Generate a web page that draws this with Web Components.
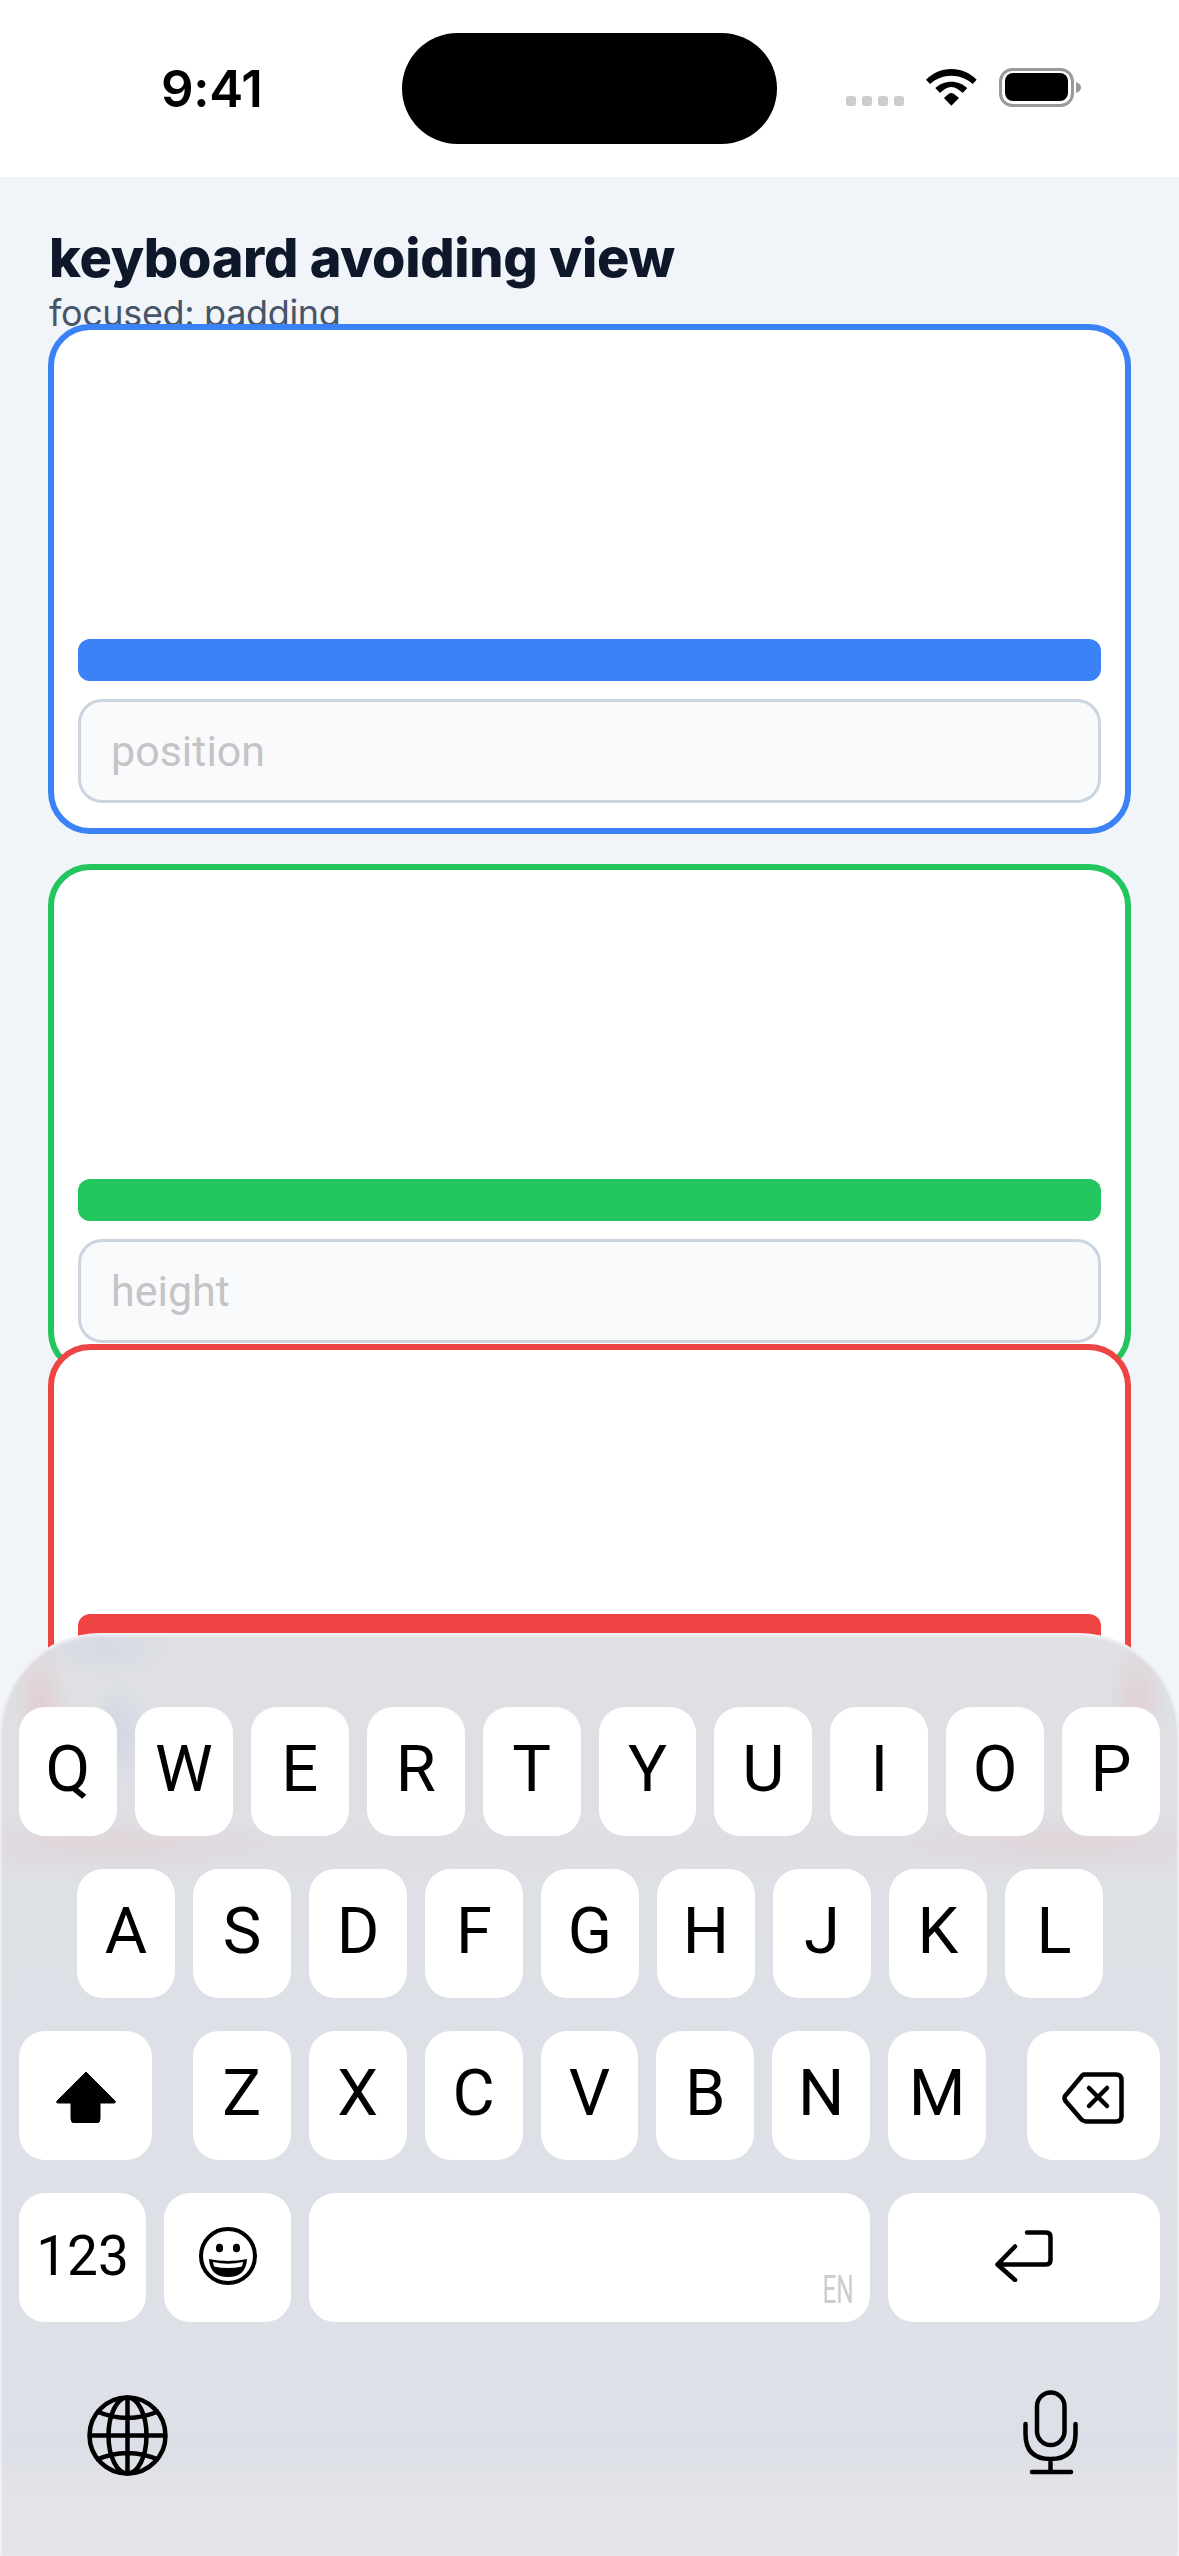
<!DOCTYPE html>
<html>
<head>
<meta charset="utf-8">
<style>
html,body{margin:0;padding:0;background:#f1f5f9;}
body{width:1179px;height:2556px;overflow:hidden;position:relative;font-family:Inter,"Liberation Sans",sans-serif;}
</style>
</head>
<body>
<status-bar></status-bar>
<kav-screen title="keyboard avoiding view" focused="focused: padding">
  <kav-card color="#3b82f6" placeholder="position"></kav-card>
  <kav-card color="#22c55e" placeholder="height"></kav-card>
  <kav-card color="#ef4444" class="last"></kav-card>
</kav-screen>
<ios-keyboard></ios-keyboard>

<script>
class StatusBar extends HTMLElement {
  constructor() {
    super();
    this.attachShadow({ mode: 'open' }).innerHTML = `
    <style>
    :host{display:flex;height:177px;background:#fff;align-items:flex-start;box-sizing:border-box;padding-top:33px;}
    .time{width:402px;box-sizing:border-box;padding-left:161px;padding-top:26px;font:600 51px/60px Inter,sans-serif;color:#000;letter-spacing:-.3px;}
    .island{width:375px;height:111px;border-radius:56px;background:#000;}
    .right{display:flex;align-items:flex-start;padding-top:36px;}
    .signal{display:flex;gap:6px;margin:27px 0 0 69px;}
    .signal i{width:10px;height:10px;border-radius:3px;background:#ccc;}
    svg{display:block;}
    .wifi{margin-left:22px;}
    .batt{margin-left:22px;margin-top:-1px;}
    </style>
    <div class="time">9:41</div>
    <div class="island"></div>
    <div class="right">
      <div class="signal"><i></i><i></i><i></i><i></i></div>
      <svg class="wifi" width="51" height="37" viewBox="0 0 51 37" fill="#000">
        <path d="M0 10.700 C7 4 15.500 0 25.300 0 C35 0 44 4 50.700 10.700 L46.700 15 C41 9.800 33.500 6.700 25.300 6.700 C17.200 6.700 9.800 9.800 4 15 Z"/>
        <path d="M9.300 19 C13.500 15 19 12.700 25.300 12.700 C31.500 12.700 37 15 41.300 19 L36.700 24 C33.700 21.500 29.700 18 25.300 18 C20.900 18 17 21.500 14 24 Z"/>
        <path d="M18 29 C20 27.500 22.500 24 25.300 24 C28 24 30.700 27.500 33 29 L25.300 36.700 Z"/>
      </svg>
      <svg class="batt" width="82" height="39" viewBox="0 0 82 39">
        <rect x="1.500" y="1.500" width="72" height="36" rx="12" fill="#fff" stroke="#999" stroke-width="3"/>
        <rect x="6" y="5" width="63" height="28" rx="8" fill="#000"/>
        <path d="M77 14 Q82 16 82 19.500 Q82 23 77 25 Z" fill="#999"/>
      </svg>
    </div>`;
  }
}
customElements.define('status-bar', StatusBar);

class KavScreen extends HTMLElement {
  constructor() {
    super();
    this.attachShadow({ mode: 'open' }).innerHTML = `
    <style>
    :host{display:block;padding:0 48px;}
    .head{height:147px;box-sizing:border-box;padding-top:48px;padding-left:1px;}
    h1{margin:0;font:800 54px/66px Inter,sans-serif;color:#0f172a;letter-spacing:-.3px;}
    p{margin:0;font:400 36px/44px Inter,sans-serif;color:#475569;letter-spacing:-.35px;}
    .list{display:flex;flex-direction:column;}
    </style>
    <div class="head"><h1></h1><p></p></div>
    <div class="list"><slot></slot></div>`;
    this.shadowRoot.querySelector('h1').textContent = this.getAttribute('title');
    this.shadowRoot.querySelector('p').textContent = this.getAttribute('focused');
  }
}
customElements.define('kav-screen', KavScreen);

class KavCard extends HTMLElement {
  constructor() {
    super();
    this.attachShadow({ mode: 'open' }).innerHTML = `
    <style>
    :host{display:flex;flex-direction:column;justify-content:flex-end;box-sizing:border-box;height:510px;margin-bottom:30px;
      border:6px solid var(--c);border-radius:42px;background:#fff;padding:24px 24px 25px;position:relative;}
    :host(.last){height:465px;margin-top:-60px;}
    .bar{height:42px;border-radius:12px;background:var(--c);margin-bottom:18px;}
    .input{height:104px;box-sizing:border-box;border:3px solid #cbd5e1;border-radius:24px;background:#f8fafc;padding-left:30px;
      font:400 43px/98px Roboto,sans-serif;color:#c4c4c7;}
    </style>
    <div class="bar"></div>
    <div class="input"></div>`;
    this.style.setProperty('--c', this.getAttribute('color'));
    this.shadowRoot.querySelector('.input').textContent = this.getAttribute('placeholder') || '';
  }
}
customElements.define('kav-card', KavCard);

class KbKey extends HTMLElement {
  constructor() {
    super();
    this.attachShadow({ mode: 'open' }).innerHTML = `
    <style>
    :host{display:flex;align-items:center;justify-content:center;width:98px;height:129px;background:#fff;border-radius:26px;
      font:400 65px/1 Roboto,sans-serif;color:#000;position:relative;padding-bottom:5px;box-sizing:border-box;}
    </style>
    <slot></slot>`;
  }
}
customElements.define('kb-key', KbKey);

class IosKeyboard extends HTMLElement {
  constructor() {
    super();
    const letters = s => [...s].map(c => `<kb-key>${c}</kb-key>`).join('');
    this.attachShadow({ mode: 'open' }).innerHTML = `
    <style>
    :host{display:block;position:absolute;left:0;right:0;top:1633px;height:923px;box-sizing:border-box;padding-top:74px;
      border-radius:100px 100px 0 0;overflow:hidden;
      box-shadow:inset 0 3px 3px rgba(255,255,255,.55),inset 2px 0 2px rgba(255,255,255,.4),inset -2px 0 2px rgba(255,255,255,.4);
      background:
        radial-gradient(ellipse 30px 64px at 40px 70px,rgba(239,68,68,.11),transparent),
        radial-gradient(ellipse 30px 64px at 1137px 70px,rgba(239,68,68,.1),transparent),
        radial-gradient(ellipse 70px 30px at 105px 16px,rgba(140,165,220,.11),transparent),
        radial-gradient(ellipse 30px 56px at 118px 100px,rgba(120,150,220,.13),transparent),
        radial-gradient(ellipse 180px 36px at 110px 210px,rgba(239,68,68,.05),transparent),
        radial-gradient(ellipse 180px 36px at 1069px 210px,rgba(239,68,68,.05),transparent),
        linear-gradient(transparent 185px,rgba(230,190,200,.1) 212px,transparent 245px),
        linear-gradient(#dfe0e4,#dee0e5 25%,#dde0e6 40%,#dde0e7 84%,#dcdfe7 88%,#dfe1e7 90.500%,#e2e4e8 93%);}
    .row{display:flex;gap:18px;padding:0 19px;margin-bottom:33px;}
    .row.r2{padding-left:77px;}
    .gapped{margin-left:23px;}
    .shift{width:133px;padding:3px 0 0 2px;}
    .del{width:133px;padding:5px 2px 0 0;margin-left:23px;}
    .num{width:127px;font-size:55px;padding-bottom:3px;}
    .emoji{width:127px;padding:0 0 4px;}
    .space{width:561px;}
    .ret{width:272px;padding:0 0 3px;}
    .en{position:absolute;right:16px;bottom:18px;font:400 38px/27px Roboto,sans-serif;color:#ccc;transform:scaleX(.64);transform-origin:right bottom;}
    .bottom{display:flex;justify-content:space-between;align-items:flex-start;padding:40px 100px 0 87px;}
    .mic{margin-top:-5px;}
    svg{display:block;}
    </style>
    <div class="row">${letters('QWERTYUIOP')}</div>
    <div class="row r2">${letters('ASDFGHJKL')}</div>
    <div class="row">
      <kb-key class="shift"><svg width="60" height="52" viewBox="0 0 60 52"><path d="M30 1 L59 30 Q60 32 58 32 H44 V48 Q44 52 40 52 H19 Q15 52 15 48 V32 H2 Q0 32 1 30 Z" fill="#000" stroke="#000" stroke-linejoin="round"/></svg></kb-key>
      <kb-key class="gapped">Z</kb-key>${letters('XCVBNM')}
      <kb-key class="del"><svg width="62" height="52" viewBox="0 0 62 52" fill="none" stroke="#000" stroke-width="4.500" stroke-linecap="round" stroke-linejoin="round"><path d="M22 2.500 H54 Q59.500 2.500 59.500 8 V44 Q59.500 49.500 54 49.500 H25 Q21.500 49.500 19 47 L3.500 29 Q1.500 26 3.500 23.500 L19 5 Q20.500 2.500 22 2.500 Z"/><path d="M27 16 L45 34 M45 16 L27 34"/></svg></kb-key>
    </div>
    <div class="row">
      <kb-key class="num">123</kb-key>
      <kb-key class="emoji"><svg width="58" height="58" viewBox="0 0 58 58"><circle cx="29" cy="29" r="27" fill="#fff" stroke="#000" stroke-width="4"/><ellipse cx="20.500" cy="21" rx="3.600" ry="4.300" fill="#000"/><ellipse cx="37.500" cy="21" rx="3.600" ry="4.300" fill="#000"/><path d="M10 32 Q29 36 48 32 Q47 50 29 50 Q11 50 10 32 Z" fill="#000"/><path d="M14 35 Q29 38.500 44 35 L43 39.500 Q29 42.500 15 39.500 Z" fill="#fff"/></svg></kb-key>
      <kb-key class="space"><span class="en">EN</span></kb-key>
      <kb-key class="ret"><svg width="58" height="52" viewBox="0 0 58 52" fill="none" stroke="#000" stroke-width="4.500" stroke-linecap="round" stroke-linejoin="round"><path d="M32 2.500 H51 Q55.500 2.500 55.500 7 V30 Q55.500 34.500 51 34.500 H2.500 M20 16.500 L2.500 34.500 L20 50"/></svg></kb-key>
    </div>
    <div class="bottom">
      <svg width="81" height="81" viewBox="0 0 81 81" fill="none" stroke="#000" stroke-width="4.500"><circle cx="40.500" cy="40.500" r="38"/><ellipse cx="40.500" cy="40.500" rx="19" ry="38"/><path d="M40.500 2 V79 M2 40.500 H79 M9 16 Q40.500 30 72 16 M9 65 Q40.500 51 72 65"/></svg>
      <svg class="mic" width="56" height="85" viewBox="0 0 56 85" fill="none" stroke="#000" stroke-width="4.500" stroke-linecap="round"><rect x="14" y="2.500" width="27.500" height="52.500" rx="13.700"/><path d="M2.500 34 V44 Q2.500 69 27.500 69 Q52.500 69 52.500 44 V34 M27.500 69 V82 M9 82 H48"/></svg>
    </div>`;
  }
}
customElements.define('ios-keyboard', IosKeyboard);
</script>
</body>
</html>
